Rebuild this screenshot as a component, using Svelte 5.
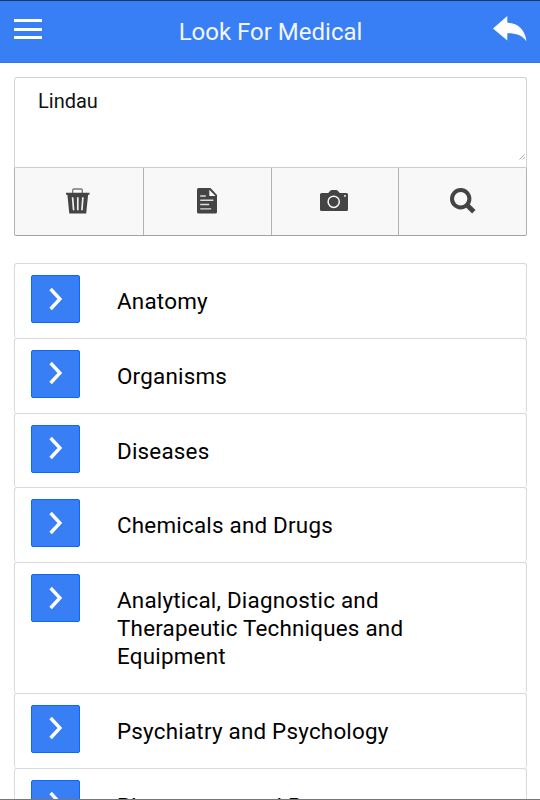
<script lang="ts">
  let query = $state('Lindau');

  const categories = [
    'Anatomy',
    'Organisms',
    'Diseases',
    'Chemicals and Drugs',
    'Analytical, Diagnostic and Therapeutic Techniques and Equipment',
    'Psychiatry and Psychology',
    'Phenomena and Processes',
  ];
</script>

<div class="screen">
  <header>
    <button class="menu" aria-label="Menu"><i></i><i></i><i></i></button>
    <h1>Look For Medical</h1>
    <button class="back" aria-label="Back">
      <svg width="34" height="26" viewBox="0 0 34 26">
        <path fill="#fff" d="M0 12.5 14.3 0v6.7C25 7 32 13.5 33.5 25.3 29 19 23 17.2 14.3 17.2v7.3z" />
      </svg>
    </button>
  </header>

  <main>
    <section class="search">
      <textarea aria-label="Search text" bind:value={query}></textarea>
      <svg class="grip" width="7" height="7" viewBox="0 0 7 7">
        <path d="M.5 6.5l5-5M3.5 6.5l2.500-2.500" stroke="#999" stroke-width=".8" />
      </svg>
      <div class="tools">
        <button aria-label="Clear">
          <svg width="24" height="26" viewBox="0 0 24 26">
            <path d="M6.7 5V2.2Q6.7 1 8 1h7q1.3 0 1.3 1.2V5" fill="none" stroke="#777" stroke-width="1.3" />
            <path d="M0 4.7h23.5v2h-1.4L20.2 25.5H3.3L1.4 6.7H0z" />
            <path d="M6.6 9.3l1 13M11.8 9.3v13M16.9 9.3l-1 13" stroke="#eee" stroke-width="1.7" fill="none" />
          </svg>
        </button>
        <button aria-label="Document">
          <svg width="20" height="26" viewBox="0 0 20 26">
            <path d="M1.5 0h12L20 7v17q0 1.5-1.5 1.5h-17Q0 25.5 0 24V1.5Q0 0 1.5 0z" />
            <path d="M12.3 1.7v6.2h6.2z" fill="#f8f8f8" />
            <path d="M3.2 8h5.6M3.2 12.3h13.2M3.2 16.5h9M3.2 20.9h11" stroke="#ddd" stroke-width="1.4" />
          </svg>
        </button>
        <button aria-label="Camera">
          <svg width="28" height="22" viewBox="0 0 28 22">
            <path d="M1.5 3h6.7L10.5.6Q11 0 12 0h4q1 0 1.5.6L19.8 3h6.7Q28 3 28 4.5v15q0 1.5-1.5 1.5h-25Q0 21 0 19.5v-15Q0 3 1.5 3z" />
            <circle cx="13.7" cy="11.8" r="5.6" fill="none" stroke="#f8f8f8" stroke-width="1.5" />
            <path d="M24.2 5h1.6v1.7h-1.6z" fill="#f8f8f8" />
          </svg>
        </button>
        <button aria-label="Search">
          <svg width="26" height="26" viewBox="0 0 26 26">
            <circle cx="10.7" cy="10.7" r="8.7" fill="none" stroke="#444" stroke-width="4" />
            <path d="M16.5 16.5l7.3 7.3" stroke="#444" stroke-width="4.8" />
          </svg>
        </button>
      </div>
    </section>

    <ul>
      {#each categories as name}
        <li>
          <button class="open" aria-label={name}>
            <svg width="14" height="24" viewBox="0 0 14 24">
              <path d="M1.6 2 10.9 12 1.6 22" fill="none" stroke="#fff" stroke-width="3.4" />
            </svg>
          </button>
          <span>{name}</span>
        </li>
      {/each}
    </ul>
  </main>
</div>

<style>
  :global(body) { margin: 0; background: #fff; overflow: hidden; }

  .screen {
    height: 800px; box-sizing: border-box; overflow: hidden;
    border-top: 1px solid #1d3764; border-bottom: 1px solid #777;
    font-family: Roboto, sans-serif; color: #000;
  }
  button { padding: 0; border: 0; background: none; font: inherit; }
  svg { display: block; }

  header {
    height: 62px; box-sizing: border-box; padding: 0 13px 0 14px;
    display: flex; align-items: flex-start; justify-content: space-between;
    background: #387ef5; border-bottom: 1px solid #3474ee;
  }
  .menu { width: 28px; padding-top: 18px; display: grid; gap: 5.5px; }
  .menu i { height: 3px; background: #fff; }
  .back { padding-top: 15px; }
  h1 {
    margin: 16px 0 0 6px; font-size: 24px; line-height: 31px;
    font-weight: 400; color: #f2f6ff;
  }

  main { padding: 14px 13px 0 14px; }

  .search { position: relative; height: 159px; display: flex; flex-direction: column; }
  textarea {
    height: 91px; box-sizing: border-box; padding: 10px 23px;
    border: 1px solid #d3d3d3; border-radius: 3px 3px 0 0; border-bottom: 0;
    resize: none; outline: none; background: #fff; color: #111;
    font: 20px/26px Roboto, sans-serif;
  }
  .grip { position: absolute; right: 1px; top: 76px; }

  .tools {
    flex: 1; display: grid; grid-template-columns: 128.5px 128px 127px 1fr;
    box-sizing: border-box; margin-top: -1px;
    border: 1px solid #b2b2b2; border-top-color: #ccc; border-bottom-color: #a2a2a2;
    border-radius: 2px; background: #f8f8f8;
  }
  .tools button {
    display: flex; align-items: center; justify-content: center;
    padding: 0 1px 2px 0; border-right: 1px solid #b2b2b2; fill: #444;
  }
  .tools button:first-child { padding-right: 2px; }
  .tools button:last-child { border-right: 0; padding: 0 0 2px 1px; }

  ul { list-style: none; margin: 27px 0 0; padding: 0; }
  li {
    display: flex; align-items: flex-start; min-height: 74.75px;
    box-sizing: border-box; padding: 11px 110px 0 16px;
    border: 1px solid #d9d9d9; border-bottom: 0; border-radius: 3px;
  }
  .open {
    flex: none; width: 49px; height: 48px; box-sizing: border-box;
    display: flex; align-items: center; justify-content: center;
    padding-bottom: 1px;
    border: 1px solid #0c68fa; border-radius: 2px; background: #387ef5;
  }
  li span {
    margin: 12px 0 0 37px; padding-bottom: 22.2px;
    font-size: 22.4px; line-height: 28.2px; letter-spacing: 0.22px;
  }
</style>
